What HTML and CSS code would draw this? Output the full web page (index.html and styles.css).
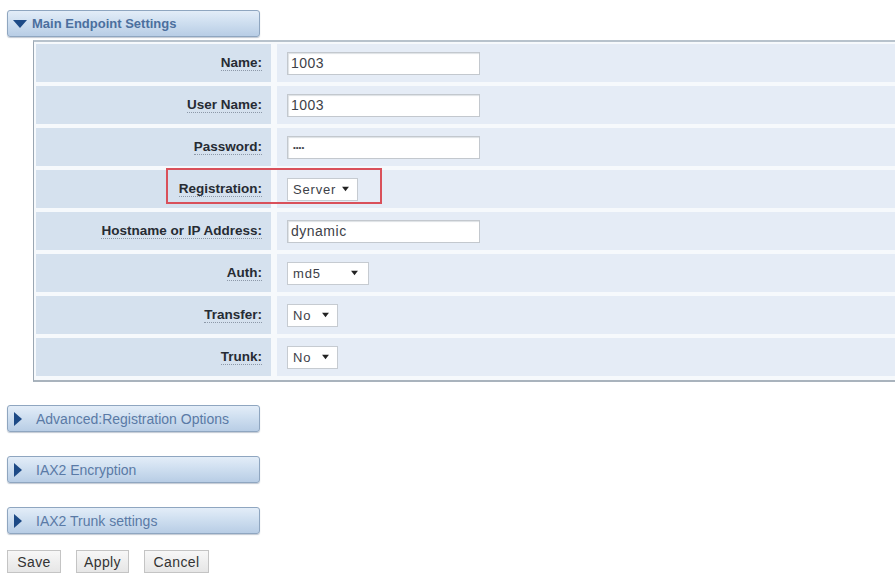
FILE: index.html
```html
<!DOCTYPE html>
<html>
<head>
<meta charset="utf-8">
<link rel="stylesheet" href="styles.css">
</head>
<body>
<div class="page">
  <div class="section-head">
    <svg class="tri" width="14" height="10" viewBox="0 0 14 10"><polygon points="0,1 14,1 7,9" fill="#1d4a86"/></svg>
    <span>Main Endpoint Settings</span>
  </div>
  <div class="panel">
    <div class="row">
      <div class="label"><span>Name:</span></div>
      <div class="value"><div class="input">1003</div></div>
    </div>
    <div class="row">
      <div class="label"><span>User Name:</span></div>
      <div class="value"><div class="input">1003</div></div>
    </div>
    <div class="row">
      <div class="label"><span>Password:</span></div>
      <div class="value"><div class="input pw">••••</div></div>
    </div>
    <div class="row">
      <div class="label"><span>Registration:</span></div>
      <div class="value"><div class="select w-server">Server<svg width="7" height="6" viewBox="0 0 8 7"><polygon points="0,1 8,1 4,6" fill="#222"/></svg></div></div>
      <div class="highlight"></div>
    </div>
    <div class="row">
      <div class="label"><span>Hostname or IP Address:</span></div>
      <div class="value"><div class="input">dynamic</div></div>
    </div>
    <div class="row">
      <div class="label"><span>Auth:</span></div>
      <div class="value"><div class="select w-md5">md5<svg width="7" height="6" viewBox="0 0 8 7"><polygon points="0,1 8,1 4,6" fill="#222"/></svg></div></div>
    </div>
    <div class="row">
      <div class="label"><span>Transfer:</span></div>
      <div class="value"><div class="select w-no">No<svg width="7" height="6" viewBox="0 0 8 7"><polygon points="0,1 8,1 4,6" fill="#222"/></svg></div></div>
    </div>
    <div class="row">
      <div class="label"><span>Trunk:</span></div>
      <div class="value"><div class="select w-no">No<svg width="7" height="6" viewBox="0 0 8 7"><polygon points="0,1 8,1 4,6" fill="#222"/></svg></div></div>
    </div>
  </div>

  <div class="section-head collapsed first">
    <svg class="tri" width="10" height="14" viewBox="0 0 10 14"><polygon points="1,0 9,7 1,14" fill="#1d4a86"/></svg>
    <span>Advanced:Registration Options</span>
  </div>
  <div class="section-head collapsed">
    <svg class="tri" width="10" height="14" viewBox="0 0 10 14"><polygon points="1,0 9,7 1,14" fill="#1d4a86"/></svg>
    <span>IAX2 Encryption</span>
  </div>
  <div class="section-head collapsed">
    <svg class="tri" width="10" height="14" viewBox="0 0 10 14"><polygon points="1,0 9,7 1,14" fill="#1d4a86"/></svg>
    <span>IAX2 Trunk settings</span>
  </div>

  <div class="buttons">
    <button class="btn w-save">Save</button>
    <button class="btn w-apply">Apply</button>
    <button class="btn w-cancel">Cancel</button>
  </div>
</div>
</body>
</html>
```

FILE: styles.css
```css
html, body {
  margin: 0;
  padding: 0;
  background: #ffffff;
  overflow: hidden;
}
body {
  font-family: "Liberation Sans", Arial, sans-serif;
  width: 895px;
  height: 576px;
}
.page {
  padding: 10px 0 0 7px;
}
.section-head {
  box-sizing: border-box;
  width: 253px;
  height: 27px;
  display: flex;
  align-items: center;
  gap: 5px;
  padding-left: 5px;
  border: 1px solid #8fa6c0;
  border-radius: 3px;
  background: linear-gradient(#e3edf8 0%, #cfdff0 45%, #b8cde5 100%);
  box-shadow: 0 1px 1px rgba(80, 100, 130, 0.35);
  color: #4b6f9e;
  font-size: 13px;
  font-weight: bold;
}
.section-head.collapsed {
  margin-top: 24px;
  padding-left: 5px;
  gap: 13px;
  font-weight: normal;
  font-size: 14px;
  color: #5a7aa6;
}
.section-head.first {
  margin-top: 23px;
}
.panel {
  margin-top: 3px;
  margin-left: 26px;
  width: 900px;
  border-top: 2px solid #b7c2cc;
  border-left: 1px solid #9aa6b2;
  border-bottom: 2px solid #a9b3bd;
  padding: 2px 0 4px 2px;
  display: flex;
  flex-direction: column;
  gap: 4px;
  background: #f6f9fc;
}
.row {
  position: relative;
  display: flex;
  gap: 6px;
  height: 38px;
}
.label {
  width: 235px;
  flex: none;
  background: #d5e1ee;
  display: flex;
  align-items: center;
  justify-content: flex-end;
  padding-right: 9px;
  box-sizing: border-box;
  font-size: 13.5px;
  font-weight: bold;
  color: #262b33;
}
.label span {
  border-bottom: 1px dotted #8c98a8;
  line-height: 15px;
}
.value {
  flex: 1;
  background: #e5ecf6;
  display: flex;
  align-items: center;
  padding-left: 10px;
}
.input {
  box-sizing: border-box;
  width: 193px;
  height: 23px;
  background: #fff;
  border: 1px solid #c3c8ce;
  box-shadow: inset 1px 1px 1px #dde1e5;
  font-size: 14px;
  letter-spacing: 0.5px;
  color: #3d4148;
  padding: 2px 0 0 3px;
}
.input.pw {
  font-size: 8px;
  padding-top: 6px;
  padding-left: 5px;
  letter-spacing: 0px;
}
.select {
  box-sizing: border-box;
  height: 23px;
  background: #fff;
  border: 1px solid #c6cbd1;
  display: flex;
  align-items: center;
  justify-content: space-between;
  padding: 0 8px 0 5px;
  font-size: 13px;
  color: #3d4148;
  letter-spacing: 0.8px;
}
.w-server { width: 71px; }
.w-md5 { width: 82px; padding-right: 10px; }
.w-no { width: 51px; }
.highlight {
  position: absolute;
  left: 130px;
  top: -2px;
  width: 216px;
  height: 36px;
  box-sizing: border-box;
  border: 2px solid #d9505a;
  pointer-events: none;
}
.buttons {
  margin-top: 16px;
  display: flex;
  gap: 15px;
}
.btn {
  box-sizing: border-box;
  height: 23px;
  border: 1px solid #c4c4c4;
  background: linear-gradient(#f7f7f7, #e6e6e6);
  font-family: "Liberation Sans", Arial, sans-serif;
  font-size: 14px;
  letter-spacing: 0.4px;
  color: #333;
  padding: 0;
}
.w-save { width: 54px; }
.w-apply { width: 53px; }
.w-cancel { width: 65px; }
```
